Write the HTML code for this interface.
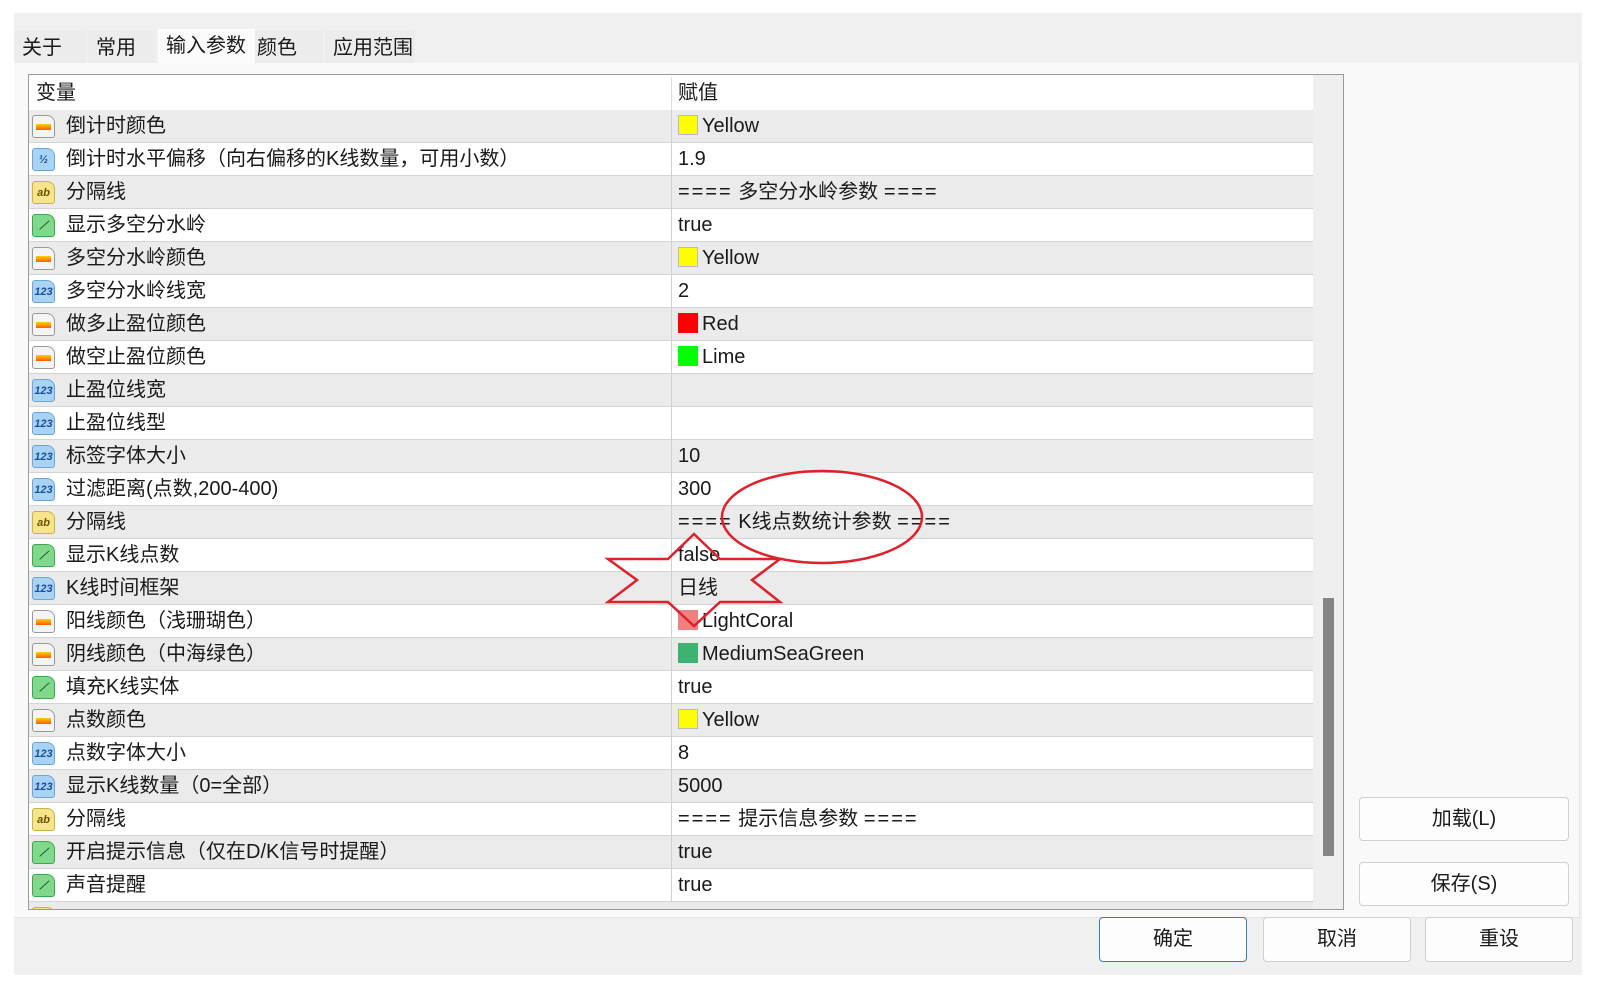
<!DOCTYPE html>
<html><head><meta charset="utf-8"><style>
*{margin:0;padding:0;box-sizing:border-box}
body{width:1600px;height:998px;background:#fff;position:relative;overflow:hidden;font-family:"Liberation Sans","Noto Sans CJK SC",sans-serif;color:#1a1a1a}
.abs{position:absolute}
.dlg{left:14px;top:13px;width:1568px;height:962px;background:#f0f0f0}
.tab{position:absolute;top:31px;height:32px;font-size:20px;line-height:34px;padding-left:8px;background:#ececec}
.panel{left:14px;top:63px;width:1566px;height:855px;background:#f9f9f9;border-right:1px solid #e4e4e4;border-bottom:1px solid #e4e4e4}
.tbl{left:28px;top:74px;width:1316px;height:836px;border:1px solid #9a9a9a;background:#fff;overflow:hidden}
.inner{position:absolute;left:0;top:2px;width:1284px;height:840px}
.row{position:absolute;left:0;width:1284px;height:33px;border-bottom:1px solid #d4d4d4;font-size:20px;line-height:33px}
.g{background:#ebebeb}
.n{position:absolute;left:37px}
.v{position:absolute;left:642px;border-left:1px solid #d0d0d0;height:33px;top:0;padding-left:6px;width:642px}
.ic{position:absolute;left:3px;top:5px;width:23px;height:23px;border-radius:3px 8px 3px 3px;font-size:11px;line-height:23px;text-align:center;font-weight:bold}
.c{background:#f4f4f4;border:1px solid #999}
.c::after{content:"";position:absolute;left:3px;top:8px;width:15px;height:6px;background:linear-gradient(#ffd000,#ff5a00)}
.b{background:#a9d3f5;border:1px solid #6aa6d8;color:#1a4f9a}
.a{background:#f6e58a;border:1px solid #c9b441;color:#6a5300}
.t{background:#7fd88b;border:1px solid #3da94d;color:#145d20}
.sw{display:inline-block;width:20px;height:20px;vertical-align:-3px;margin-right:4px}
.btn{position:absolute;background:#fdfdfd;border:1px solid #d0d0d0;border-radius:4px;font-size:20px;text-align:center}
.eq{letter-spacing:2px}
</style></head><body>
<div class="abs dlg"></div>
<div class="tab" style="left:14px;width:72px">关于</div>
<div class="tab" style="left:88px;width:67px;">常用</div>
<div class="tab" style="left:158px;width:97px;background:#fbfbfb;top:29px;height:35px">输入参数</div>
<div class="tab" style="left:255px;width:68px;padding-left:2px">颜色</div>
<div class="tab" style="left:325px;width:90px;padding-left:8px">应用范围</div>
<div class="abs panel"></div>
<div class="abs tbl"><div class="inner">
<div class="row" style="top:0;border-bottom:none;height:33px"><span style="position:absolute;left:7px">变量</span><span class="v" style="border-left:1px solid #ddd">赋值</span></div>
<div class="row g" style="top:33px"><i class="ic c"></i><span class="n">倒计时颜色</span><span class="v"><i class="sw" style="background:#ffff00;border:1px solid #bbb"></i>Yellow</span></div>
<div class="row" style="top:66px"><i class="ic b">½</i><span class="n">倒计时水平偏移（向右偏移的K线数量，可用小数）</span><span class="v">1.9</span></div>
<div class="row g" style="top:99px"><i class="ic a">ab</i><span class="n">分隔线</span><span class="v"><span class="eq">====</span> 多空分水岭参数 <span class="eq">====</span></span></div>
<div class="row" style="top:132px"><i class="ic t">⟋</i><span class="n">显示多空分水岭</span><span class="v">true</span></div>
<div class="row g" style="top:165px"><i class="ic c"></i><span class="n">多空分水岭颜色</span><span class="v"><i class="sw" style="background:#ffff00;border:1px solid #bbb"></i>Yellow</span></div>
<div class="row" style="top:198px"><i class="ic b">123</i><span class="n">多空分水岭线宽</span><span class="v">2</span></div>
<div class="row g" style="top:231px"><i class="ic c"></i><span class="n">做多止盈位颜色</span><span class="v"><i class="sw" style="background:#ff0000"></i>Red</span></div>
<div class="row" style="top:264px"><i class="ic c"></i><span class="n">做空止盈位颜色</span><span class="v"><i class="sw" style="background:#00ff00"></i>Lime</span></div>
<div class="row g" style="top:297px"><i class="ic b">123</i><span class="n">止盈位线宽</span><span class="v"></span></div>
<div class="row" style="top:330px"><i class="ic b">123</i><span class="n">止盈位线型</span><span class="v"></span></div>
<div class="row g" style="top:363px"><i class="ic b">123</i><span class="n">标签字体大小</span><span class="v">10</span></div>
<div class="row" style="top:396px"><i class="ic b">123</i><span class="n">过滤距离(点数,200-400)</span><span class="v">300</span></div>
<div class="row g" style="top:429px"><i class="ic a">ab</i><span class="n">分隔线</span><span class="v"><span class="eq">====</span> K线点数统计参数 <span class="eq">====</span></span></div>
<div class="row" style="top:462px"><i class="ic t">⟋</i><span class="n">显示K线点数</span><span class="v">false</span></div>
<div class="row g" style="top:495px"><i class="ic b">123</i><span class="n">K线时间框架</span><span class="v">日线</span></div>
<div class="row" style="top:528px"><i class="ic c"></i><span class="n">阳线颜色（浅珊瑚色）</span><span class="v"><i class="sw" style="background:#f08080"></i>LightCoral</span></div>
<div class="row g" style="top:561px"><i class="ic c"></i><span class="n">阴线颜色（中海绿色）</span><span class="v"><i class="sw" style="background:#3cb371"></i>MediumSeaGreen</span></div>
<div class="row" style="top:594px"><i class="ic t">⟋</i><span class="n">填充K线实体</span><span class="v">true</span></div>
<div class="row g" style="top:627px"><i class="ic c"></i><span class="n">点数颜色</span><span class="v"><i class="sw" style="background:#ffff00;border:1px solid #bbb"></i>Yellow</span></div>
<div class="row" style="top:660px"><i class="ic b">123</i><span class="n">点数字体大小</span><span class="v">8</span></div>
<div class="row g" style="top:693px"><i class="ic b">123</i><span class="n">显示K线数量（0=全部）</span><span class="v">5000</span></div>
<div class="row" style="top:726px"><i class="ic a">ab</i><span class="n">分隔线</span><span class="v"><span class="eq">====</span> 提示信息参数 <span class="eq">====</span></span></div>
<div class="row g" style="top:759px"><i class="ic t">⟋</i><span class="n">开启提示信息（仅在D/K信号时提醒）</span><span class="v">true</span></div>
<div class="row" style="top:792px"><i class="ic t">⟋</i><span class="n">声音提醒</span><span class="v">true</span></div>
<div class="row g" style="top:825px"><i class="ic a"></i></div>
</div>
<div style="position:absolute;left:1284px;top:0;width:31px;height:836px;background:#efefef"></div>
<div style="position:absolute;left:1294px;top:523px;width:11px;height:258px;background:#858585"></div>
</div>
<svg class="abs" style="left:0;top:0" width="1600" height="998">
<ellipse cx="822" cy="517" rx="100" ry="46" fill="none" stroke="#e0202a" stroke-width="2.5"/>
<polygon points="694,534 720,559 780,559 752,580 780,602 720,602 694,626 668,602 608,602 637,580 608,559 668,559" fill="none" stroke="#e0202a" stroke-width="2.5"/>
</svg>
<div class="btn" style="left:1359px;top:797px;width:210px;height:44px;line-height:42px">加载(L)</div>
<div class="btn" style="left:1359px;top:862px;width:210px;height:44px;line-height:42px">保存(S)</div>
<div class="btn" style="left:1099px;top:917px;width:148px;height:45px;line-height:43px;border-color:#3a7bc8">确定</div>
<div class="btn" style="left:1263px;top:917px;width:148px;height:45px;line-height:43px">取消</div>
<div class="btn" style="left:1425px;top:917px;width:148px;height:45px;line-height:43px">重设</div>
</body></html>
